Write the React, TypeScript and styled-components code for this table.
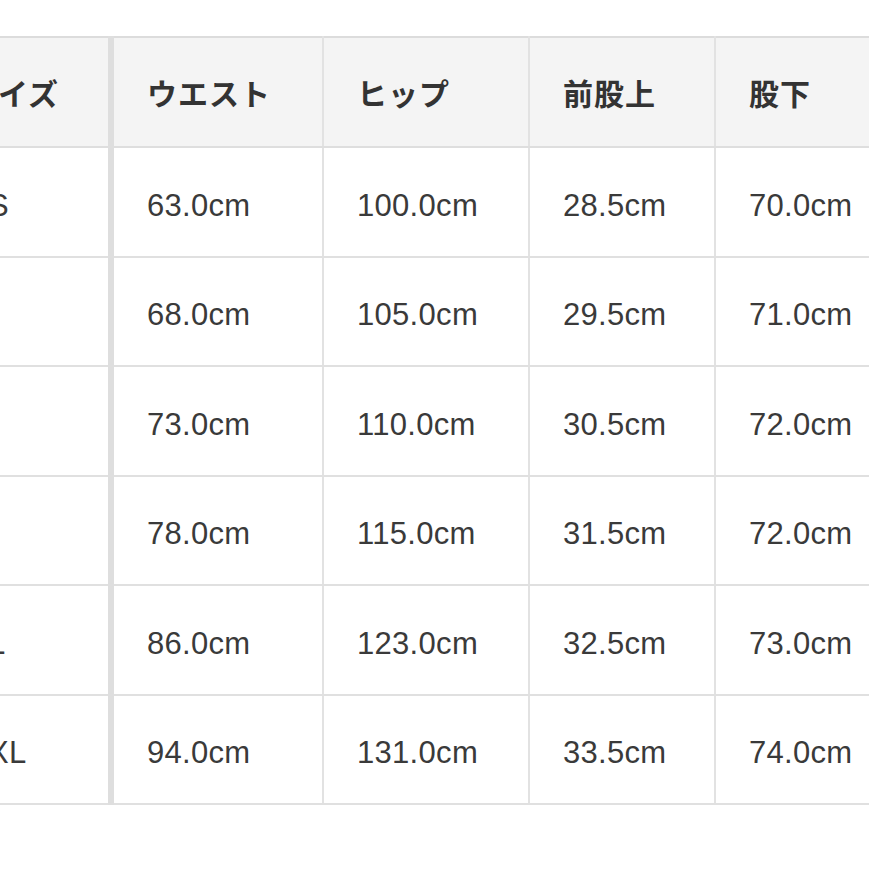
import React from 'react';
import styled, { createGlobalStyle } from 'styled-components';

const GlobalStyle = createGlobalStyle`
  html, body {
    margin: 0;
    padding: 0;
    background: #ffffff;
    overflow: hidden;
  }
  body {
    font-family: 'Liberation Sans', Arial, 'Noto Sans CJK JP', sans-serif;
  }
`;

const Page = styled.div`
  width: 869px;
  height: 869px;
  overflow: hidden;
  padding-top: 36px;
  box-sizing: border-box;
`;

const SizeTable = styled.table`
  margin-left: -66px;
  border-collapse: collapse;
  table-layout: fixed;
  width: 1050px;
  border-top: 2px solid #dcdcdc;
  border-bottom: 2px solid #dcdcdc;
`;

const HeadCell = styled.th<{ $first?: boolean }>`
  height: 108px;
  padding: 0 0 0 33px;
  text-align: left;
  background: #f4f4f4;
  color: #333333;
  font-family: 'Noto Sans CJK JP', 'Liberation Sans', sans-serif;
  font-size: 30px;
  font-weight: 700;
  letter-spacing: 1px;
  white-space: nowrap;
  border-right: ${p => (p.$first ? '6px solid #dedede' : '2px solid #e2e2e2')};
  border-bottom: 2px solid #dedede;
`;

const Cell = styled.td<{ $first?: boolean }>`
  height: 109.5px;
  padding: 8px 0 0 33px;
  box-sizing: border-box;
  color: #3a3a3a;
  font-family: 'Liberation Sans', Arial, sans-serif;
  font-size: 31px;
  letter-spacing: 0.3px;
  white-space: nowrap;
  border-right: ${p => (p.$first ? '6px solid #dedede' : '2px solid #e2e2e2')};
  border-bottom: 2px solid #e0e0e0;
`;

const columns = [
  { label: 'サイズ', width: 177 },
  { label: 'ウエスト', width: 212 },
  { label: 'ヒップ', width: 206 },
  { label: '前股上', width: 186 },
  { label: '股下', width: 269 },
];

const rows = [
  ['XS', '63.0cm', '100.0cm', '28.5cm', '70.0cm'],
  ['S', '68.0cm', '105.0cm', '29.5cm', '71.0cm'],
  ['M', '73.0cm', '110.0cm', '30.5cm', '72.0cm'],
  ['L', '78.0cm', '115.0cm', '31.5cm', '72.0cm'],
  ['XL', '86.0cm', '123.0cm', '32.5cm', '73.0cm'],
  ['XXL', '94.0cm', '131.0cm', '33.5cm', '74.0cm'],
];

const App: React.FC = () => {
  return (
    <Page>
      <GlobalStyle />
      <SizeTable>
        <colgroup>
          {columns.map(col => (
            <col key={col.label} style={{ width: col.width }} />
          ))}
        </colgroup>
        <thead>
          <tr>
            {columns.map((col, i) => (
              <HeadCell key={col.label} $first={i === 0}>
                {col.label}
              </HeadCell>
            ))}
          </tr>
        </thead>
        <tbody>
          {rows.map(row => (
            <tr key={row[0]}>
              {row.map((value, i) => (
                <Cell key={i} $first={i === 0}>
                  {value}
                </Cell>
              ))}
            </tr>
          ))}
        </tbody>
      </SizeTable>
    </Page>
  );
};

export default App;
